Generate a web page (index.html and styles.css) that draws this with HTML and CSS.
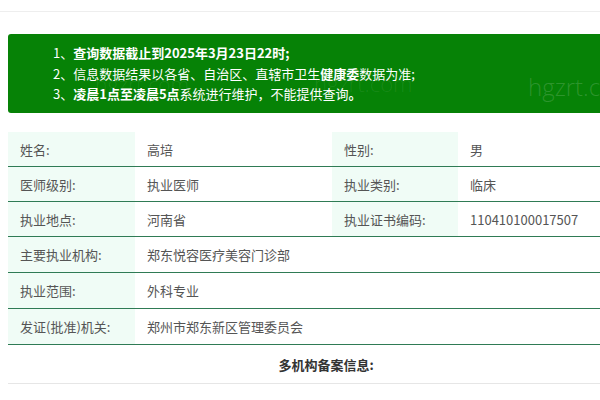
FILE: index.html
```html
<!DOCTYPE html>
<html lang="zh-CN">
<head>
<meta charset="utf-8">
<title>医师信息查询</title>
<link rel="stylesheet" href="styles.css">
</head>
<body>
<div class="topbar"></div>
<div class="page">
  <div class="notice">
    <p class="line"><span class="num">1、</span><b>查询数据截止到2025年3月23日22时;</b></p>
    <p class="line"><span class="num">2、</span>信息数据结果以各省、自治区、直辖市卫生<b>健康委</b>数据为准;</p>
    <p class="line"><span class="num">3、</span><b>凌晨1点至凌晨5点</b>系统进行维护，不能提供查询<b>。</b></p>
    <span class="wm wm-a">hgzrt.com</span>
    <span class="wm wm-b">hgzrt.com</span>
    <span class="wm wm-c">hgzrt.com</span>
  </div>
  <table class="info">
    <colgroup>
      <col class="c1"><col class="c2"><col class="c3"><col class="c4">
    </colgroup>
    <tr><td class="lab">姓名:</td><td>高培</td><td class="lab">性别:</td><td>男</td></tr>
    <tr><td class="lab">医师级别:</td><td>执业医师</td><td class="lab">执业类别:</td><td>临床</td></tr>
    <tr><td class="lab">执业地点:</td><td>河南省</td><td class="lab">执业证书编码:</td><td class="mono">110410100017507</td></tr>
    <tr class="tall"><td class="lab">主要执业机构:</td><td colspan="3">郑东悦容医疗美容门诊部</td></tr>
    <tr class="tall"><td class="lab">执业范围:</td><td colspan="3">外科专业</td></tr>
    <tr class="tall"><td class="lab">发证(批准)机关:</td><td colspan="3">郑州市郑东新区管理委员会</td></tr>
    <tr class="multi"><td colspan="4">多机构备案信息:</td></tr>
  </table>
</div>
</body>
</html>
```

FILE: styles.css
```css
html, body {
  margin: 0;
  padding: 0;
  background: #fff;
  overflow: hidden;
}
body {
  font-family: "Noto Sans CJK SC", "Noto Sans", sans-serif;
  color: #555;
  font-size: 13px;
}
.topbar {
  height: 11px;
  border-bottom: 1px solid #eeeeee;
}
.page {
  width: 636px;
  padding: 0 8px;
}
.notice {
  position: relative;
  overflow: hidden;
  margin-top: 22px;
  height: 79px;
  box-sizing: border-box;
  padding: 9px 0 0 45px;
  background: #068206;
  border-radius: 3px;
  color: #fff;
}
.line {
  margin: 0;
  line-height: 20.5px;
  font-size: 13px;
  white-space: nowrap;
  position: relative;
  z-index: 1;
}
.line b { font-weight: 700; }
.wm {
  position: absolute;
  font-family: "Open Sans", "Noto Sans", sans-serif;
  font-size: 24px;
  font-weight: 300;
  color: rgba(255, 255, 255, 0.16);
  white-space: nowrap;
}
.wm-a { left: 87px; top: 36px; font-size: 21px; color: rgba(255,255,255,0.08); }
.wm-b { left: 306px; top: 34px; font-size: 22px; color: rgba(255,255,255,0.08); }
.wm-c { left: 520px; top: 36px; }
.info {
  margin-top: 19px;
  width: 636px;
  border-collapse: collapse;
  table-layout: fixed;
}
.c1 { width: 127px; }
.c2 { width: 197px; }
.c3 { width: 126px; }
.c4 { width: 186px; }
.info td {
  height: 34px;
  padding: 0 0 0 12px;
  border-bottom: 1px solid #2f7b55;
  vertical-align: middle;
  white-space: nowrap;
  font-size: 13px;
  color: #555;
}
.info tr.tall td {
  height: 35px;
}
.info td.lab {
  background: #f0fcf6;
}
.info tr.multi td {
  height: 38px;
  padding: 0;
  text-align: center;
  font-weight: 700;
  color: #333;
  border-bottom: 1px solid #e6e6e6;
}
```
